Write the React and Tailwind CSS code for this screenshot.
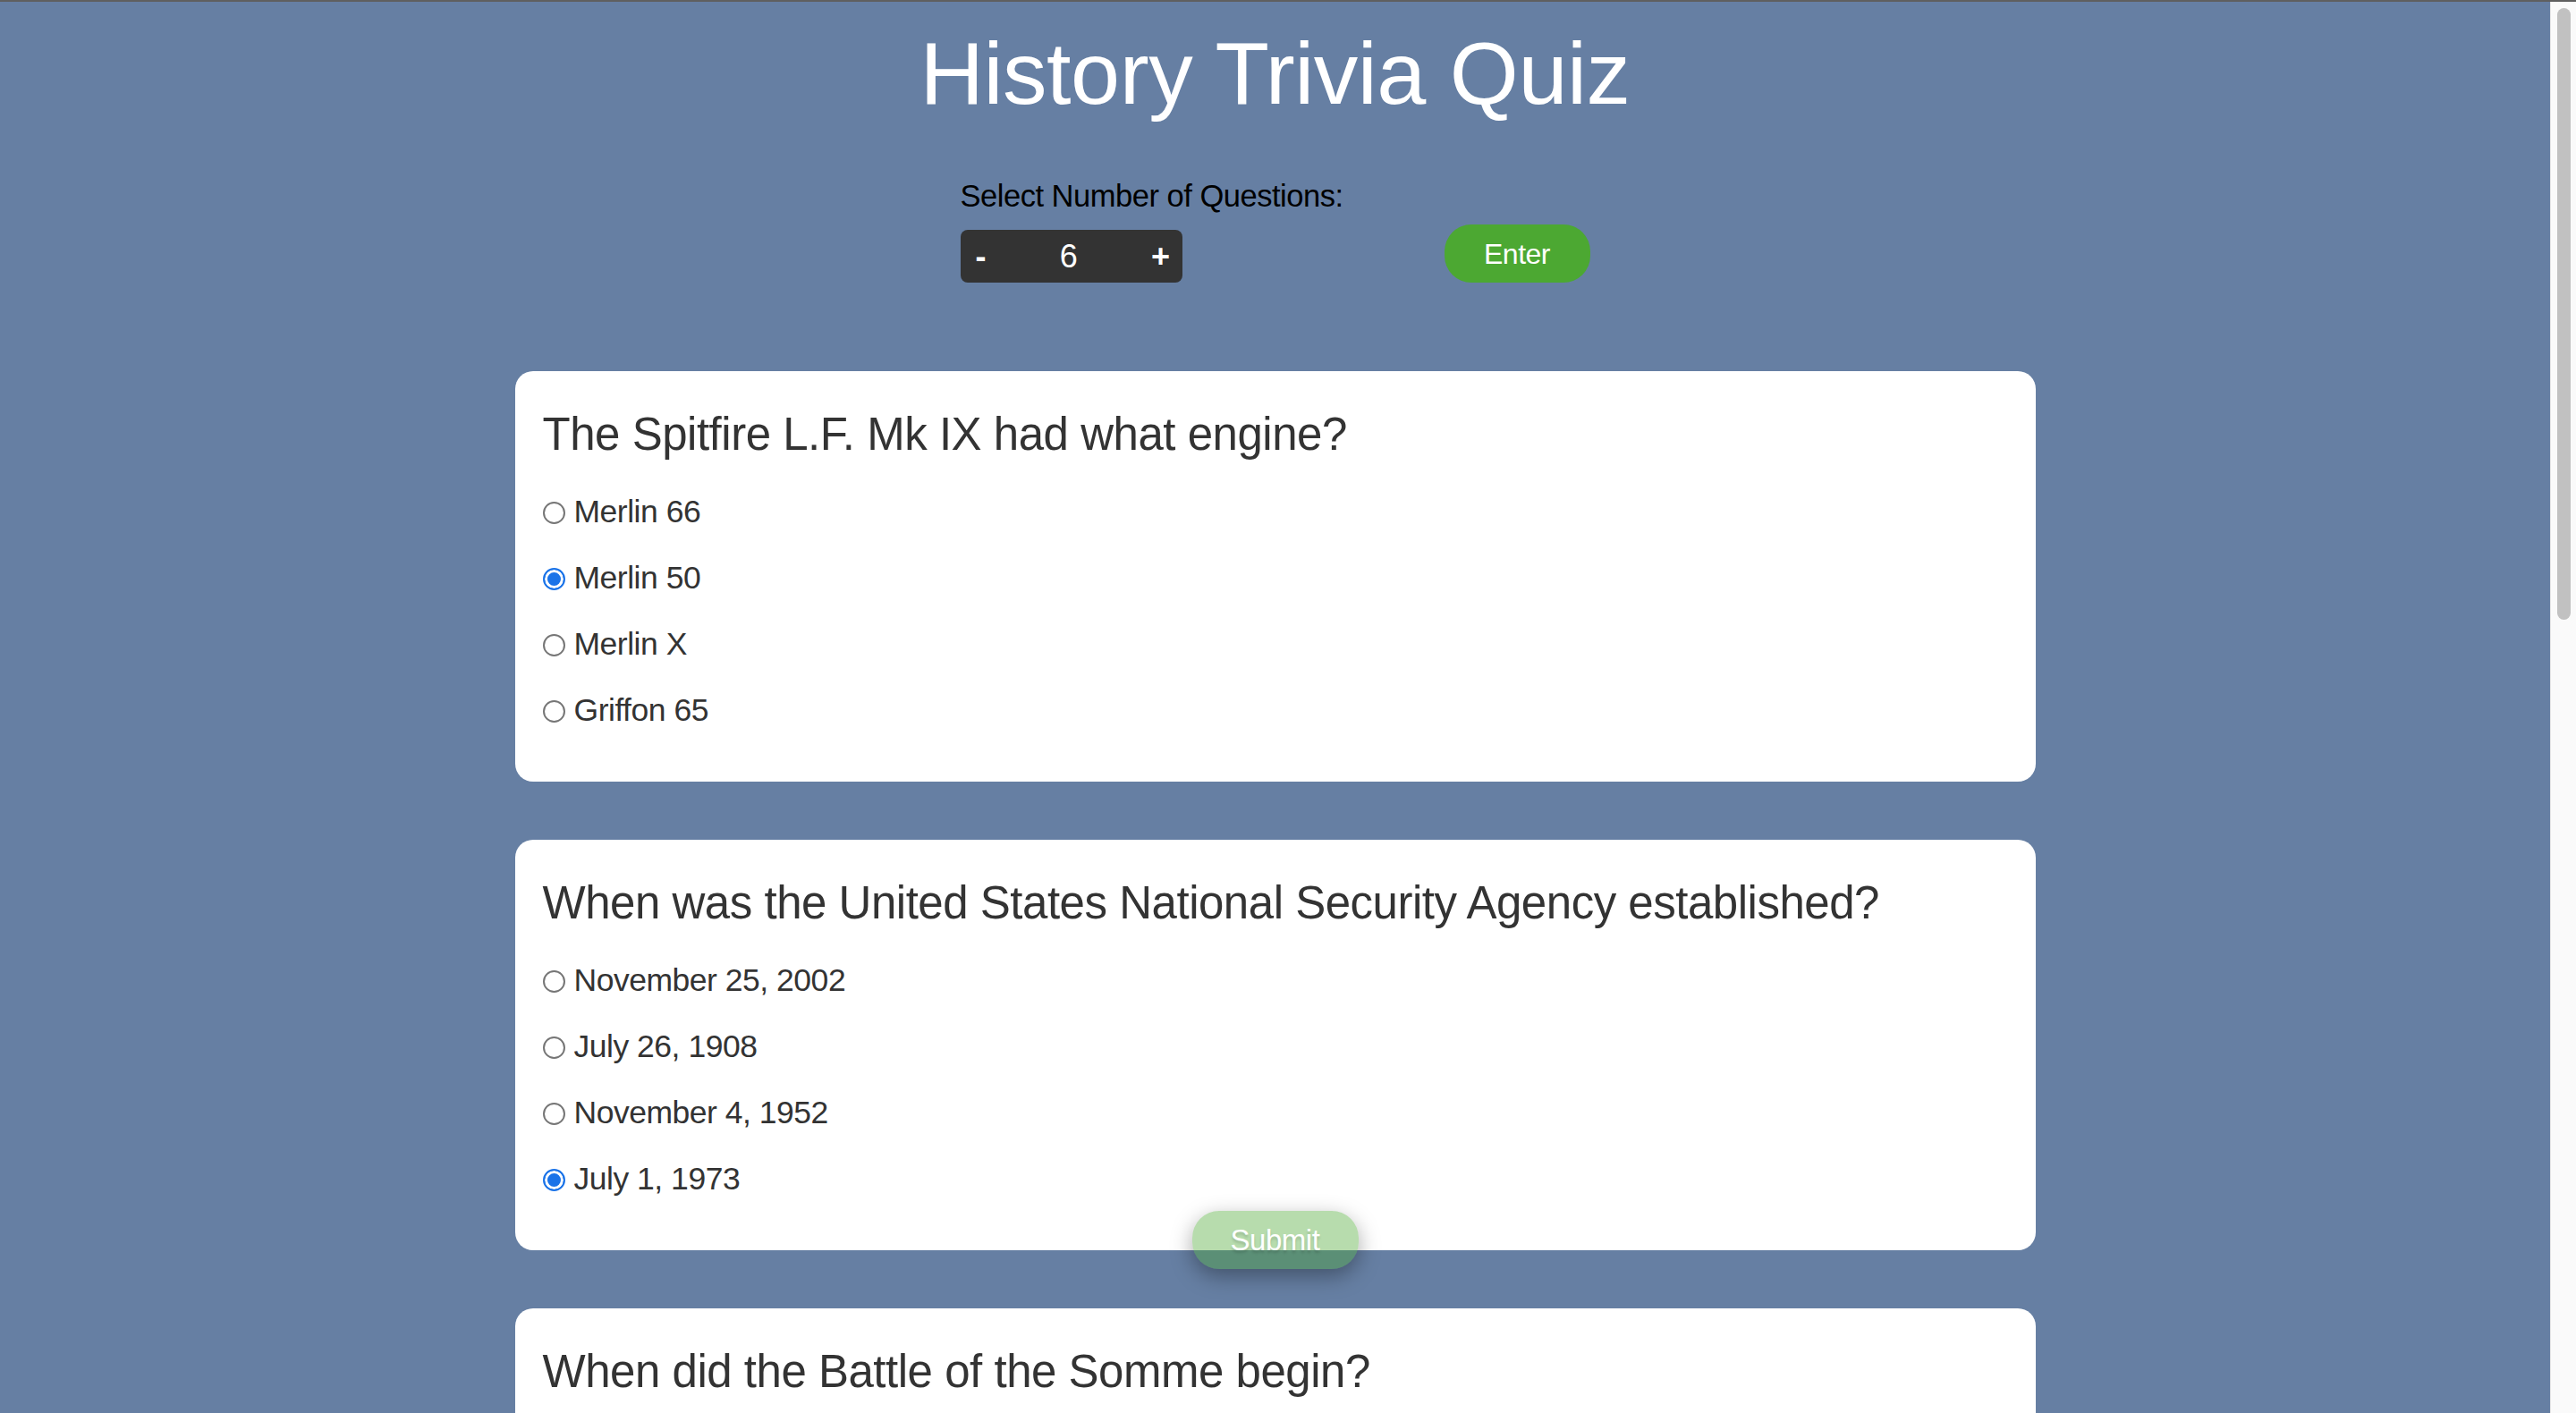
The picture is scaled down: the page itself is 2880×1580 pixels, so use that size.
import React from 'react';

const FONT = { fontFamily: '"Liberation Sans", Arial, sans-serif' };

const questions = [
    {
        q: 'The Spitfire L.F. Mk IX had what engine?',
        options: ['Merlin 66', 'Merlin 50', 'Merlin X', 'Griffon 65'],
        picked: 1,
    },
    {
        q: 'When was the United States National Security Agency established?',
        options: ['November 25, 2002', 'July 26, 1908', 'November 4, 1952', 'July 1, 1973'],
        picked: 3,
    },
    {
        q: 'When did the Battle of the Somme begin?',
        options: ['July 1, 1916', 'August 4, 1914', 'June 6, 1944', 'March 21, 1918'],
        picked: -1,
    },
];

const QuestionCard = ({ item, idx }) => (
    <div className="w-[1700px] shrink-0 bg-white rounded-[20px] pt-[21px] pb-[42px] px-[31px] text-[#333333] tracking-[-0.03em]">
        <h2 className="text-[51px] leading-[100px] h-[100px] whitespace-nowrap">{item.q}</h2>
        {item.options.map((opt, i) => (
            <label key={opt} className="h-[74px] flex items-center gap-[10px] text-[35.5px]">
                <input
                    type="radio"
                    name={`q${idx}`}
                    defaultChecked={i === item.picked}
                    className="appearance-none shrink-0 w-[25px] h-[25px] m-0 rounded-full border-2 border-[#767676] bg-white checked:border-[#1a73e8] checked:bg-[#1a73e8] checked:shadow-[inset_0_0_0_3px_#ffffff]"
                />
                <span>{opt}</span>
            </label>
        ))}
    </div>
);

const App = () => {
    return (
        <div className="h-screen w-full overflow-hidden flex border-t-2 border-[#5f5f5f] bg-[#667fa3] tracking-[-0.03em]" style={FONT}>
            <main className="relative flex-1 flex flex-col items-center">
                <h1 className="text-white text-[99px] leading-[150px] mt-[5px]">History Trivia Quiz</h1>

                <div className="w-[704px] mt-[38px]">
                    <p className="text-black text-[34.5px] leading-[48px]">Select Number of Questions:</p>
                    <div className="flex items-end justify-between mt-[8px]">
                        <div className="w-[248px] h-[59px] bg-[#333333] rounded-[8px] flex items-center justify-between pl-[17px] pr-[14px] text-white text-[36px]">
                            <button className="font-bold">-</button>
                            <span>6</span>
                            <button className="font-bold">+</button>
                        </div>
                        <button className="w-[163px] h-[65px] rounded-[30px] bg-[#4ca832] text-white text-[32px]">Enter</button>
                    </div>
                </div>

                <div className="flex flex-col gap-[65px] mt-[99px]">
                    {questions.map((item, idx) => (
                        <QuestionCard key={item.q} item={item} idx={idx} />
                    ))}
                </div>

                <button className="absolute left-1/2 -translate-x-1/2 top-[1352px] w-[186px] h-[65px] rounded-[30px] bg-[#4ca832]/40 text-white text-[33px] shadow-[0_8px_24px_rgba(0,0,0,0.35)] [text-shadow:0_3px_3px_rgba(0,0,0,0.15)]">
                    Submit
                </button>
            </main>

            <div className="w-[29px] shrink-0 bg-[#fafafa] border-l border-[#e6e6e6] pt-[7px] flex justify-center">
                <div className="w-[15px] h-[684px] rounded-full bg-[#c1c1c1]" />
            </div>
        </div>
    );
};

export default App;
